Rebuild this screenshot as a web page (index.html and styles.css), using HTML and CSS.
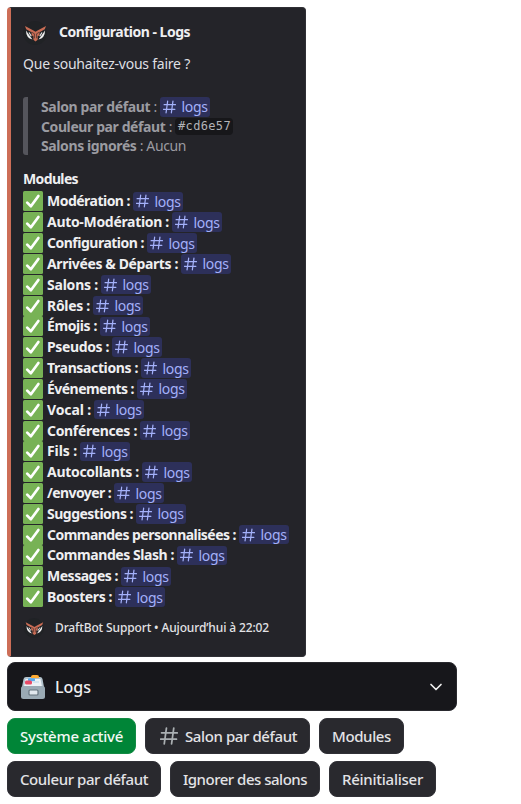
FILE: index.html
```
<!DOCTYPE html>
<html lang="fr">
<head>
<meta charset="utf-8">
<title>Configuration - Logs</title>
<link rel="stylesheet" href="styles.css">
</head>
<body>
<svg class="defs" aria-hidden="true">
  <symbol id="owl" viewBox="0 0 24 24">
    <circle cx="12" cy="12" r="12" fill="#202225"/>
    <path d="M3 9.500Q3 17 9.500 18.500L6.500 14.500ZM22 9.500Q22 17 15.500 18.500L18.500 14.500Z" fill="#f0f0f0"/>
    <path d="M6 11.500 8.300 15.300M19 11.500 16.700 15.300" fill="none" stroke="#e4e4e4" stroke-width="1.200"/>
    <path d="M2 5 10 9.300l2.500 1.500 2.500-1.500L23 5l-1.200 3.300-5.300 3v2.900l-1.800 1v3.600L12.500 20.500l-2.100-1.700v-3.600l-1.800-1v-2.900L3.200 8.300Z" fill="#c96c55"/>
    <path d="M8.700 11.200 11.400 12.800v4.500M16.300 11.200 13.600 12.800v4.500" fill="none" stroke="#3b2c2b" stroke-width=".7"/>
  </symbol>
  <symbol id="hash" viewBox="0 0 14 14">
    <path d="M5 .8 3.300 13.200M10.700 .8 9 13.200M1.200 4.500H13.500M.5 9.500H12.800" fill="none" stroke="currentColor" stroke-width="1.350" stroke-linecap="round"/>
  </symbol>
  <symbol id="check" viewBox="0 0 20 20">
    <rect width="20" height="20" rx="1.500" fill="#77b255"/>
    <path d="M4.200 11.600 7.900 15.200 15.400 5" fill="none" stroke="#fff" stroke-width="2.700" stroke-linecap="round" stroke-linejoin="round"/>
  </symbol>
</svg>
<main class="message">
  <article class="embed">
    <header class="author"><svg class="author-icon"><use href="#owl"/></svg><b data-width="131">Configuration - Logs</b></header>
    <p class="question"><span data-width="167">Que souhaitez-vous faire ?</span></p>
    <blockquote class="quote">
      <div class="quote-line"><span class="key" data-width="116" data-gap="3"><b>Salon par défaut</b> :</span><span class="chip"><svg><use href="#hash"/></svg><span data-width="26">logs</span></span></div>
      <div class="quote-line"><span class="key" data-width="131" data-gap="3"><b>Couleur par défaut</b> :</span><code><span data-width="53">#cd6e57</span></code></div>
      <div class="quote-line"><span data-width="145"><b>Salons ignorés</b> : Aucun</span></div>
    </blockquote>
    <h2 class="heading"><span data-width="55">Modules</span></h2>
    <div class="modules" id="modules"></div>
    <footer class="footer"><svg class="footer-icon"><use href="#owl"/></svg><span data-width="214">DraftBot Support • Aujourd’hui à 22:02</span></footer>
  </article>
  <div class="select">
    <svg class="cabinet" viewBox="0 0 24 24">
      <path d="M1 12 2.500 4Q3 2 5 2H19Q21 2 21.500 4L23 12Z" fill="#b2c2cc"/>
      <path d="M3 12 4.500 4H19.500L21 12Z" fill="#edf2f5"/>
      <path d="M10 2Q10 0 12 0h4q2 0 2 2v1h-8Z" fill="#ffac33"/>
      <rect x="7" y="3.200" width="7" height="3" rx="1" fill="#55acee"/>
      <path d="M12 6h6v2h-6Z" fill="#d3e4ef"/>
      <rect x="4" y="5.500" width="7" height="4" rx="1.500" fill="#e84b67"/>
      <rect y="11" width="24" height="13" rx="2.500" fill="#9aaab4"/>
      <rect x="8" y="15" width="9" height="5" rx="1" fill="#e1e8ed" stroke="#66757f" stroke-width="1.200"/>
    </svg>
    <span data-width="36">Logs</span>
    <svg class="chevron" viewBox="0 0 14 8"><path d="m2 1.500 5 5 5-5" fill="none" stroke="#eee" stroke-width="1.700" stroke-linecap="round" stroke-linejoin="round"/></svg>
  </div>
  <div class="buttons">
    <button class="success"><span data-width="103">Système activé</span></button>
    <button><svg class="button-hash"><use href="#hash"/></svg><span data-width="112">Salon par défaut</span></button>
    <button><span data-width="59">Modules</span></button>
  </div>
  <div class="buttons">
    <button><span data-width="128">Couleur par défaut</span></button>
    <button><span data-width="124">Ignorer des salons</span></button>
    <button><span data-width="81">Réinitialiser</span></button>
  </div>
</main>
<script src="app.js"></script>
</body>
</html>
```
FILE: styles.css
```
* { box-sizing: border-box; }
body { margin: 0; background: #fff; color: #efeff1; font-family: "Noto Sans", "Open Sans", sans-serif; font-size: 14px; white-space: nowrap; }
svg { display: block; flex: none; }
p, h2, blockquote { margin: 0; }
.defs { position: absolute; width: 0; height: 0; }
[data-width] { display: inline-block; flex: none; white-space: pre; }
.message { padding: 7px; }
.embed { width: 299px; height: 650px; padding: 12px 12px 0; border: 1px solid #303035; border-left: 4px solid #cd6e57; border-radius: 4px; background: #242429; }
.author { display: flex; align-items: center; height: 24px; gap: 12px; }
.author b { margin-top: -1px; }
.author-icon { width: 24px; height: 24px; margin-top: 2px; }
.question { height: 20px; margin-top: 10px; line-height: 20px; color: #dfdfe2; }
.quote { margin-top: 23px; height: 58px; padding-left: 13px; border-left: 5px solid #55555c; border-radius: 3px; color: #9b9ba1; }
.quote-line { display: flex; align-items: center; height: 19.500px; }
.chip { display: flex; align-items: center; width: 49.500px; height: 19.500px; padding-left: 3px; border-radius: 3px; background: #2d305a; color: #a4b1fa; line-height: 19px; }
.chip svg { width: 13px; height: 14px; margin-right: 5.500px; }
code { width: 58px; height: 17px; padding-left: 3px; border-radius: 4px; background: #17171a; color: #b3b3b7; font: 12px/17px "DejaVu Sans Mono", monospace; }
.heading { height: 20px; margin-top: 14px; font-size: 14px; line-height: 20px; }
.modules { margin-top: 2px; }
.module { display: flex; align-items: center; height: 20.840px; }
.module > svg { width: 20px; height: 20px; margin-right: 4px; }
.label { flex: none; font-weight: 700; line-height: 20px; }
.footer { display: flex; align-items: center; height: 20px; margin-top: 10px; gap: 11px; font-size: 12px; font-weight: 500; color: #e2e2e5; }
.footer-icon { width: 20px; height: 20px; margin-left: 1px; }
.select { display: flex; align-items: center; width: 450px; height: 49px; margin: 5px 0 7px; padding: 0 13px; border: 1px solid #29292e; border-radius: 8px; background: #17171b; font-size: 16px; font-weight: 500; }
.cabinet { width: 24px; height: 24px; margin-right: 10px; }
.chevron { width: 14px; height: 8px; margin-left: auto; }
.buttons { display: flex; gap: 9px; margin-bottom: 7px; }
button { display: flex; align-items: center; height: 36px; padding: 0 12px 1px; border: 1px solid #303036; border-radius: 8px; background: #29292e; color: #e3e3e6; font: 500 15px/20px "Noto Sans", sans-serif; }
.success { border-color: #138b44; background: #008537; color: #f2f8f4; }
.button-hash { width: 18px; height: 18px; margin: 1px 7px 0 2px; color: #aaafb2; }
```
FILE: app.js
```
const modules = [
  ['Modération', 86], ['Auto-Modération', 125], ['Configuration', 100], ['Arrivées & Départs', 134],
  ['Salons', 54], ['Rôles', 46], ['Émojis', 53], ['Pseudos', 65], ['Transactions', 94],
  ['Événements', 90], ['Vocal', 47], ['Conférences', 93], ['Fils', 33], ['Autocollants', 95],
  ['/envoyer', 67], ['Suggestions', 89], ['Commandes personnalisées', 192],
  ['Commandes Slash', 130], ['Messages', 74], ['Boosters', 68]
];
document.getElementById('modules').innerHTML = modules.map(([name, width]) =>
  `<div class="module"><svg><use href="#check"/></svg><span class="label" data-width="${width - 3}" data-gap="3">${name.replace('&', '&amp;')} :</span><span class="chip"><svg><use href="#hash"/></svg><span data-width="26">logs</span></span></div>`
).join('');

document.querySelectorAll('[data-width]').forEach(el => {
  const target = Number(el.dataset.width);
  const natural = el.getBoundingClientRect().width;
  el.style.letterSpacing = `${(target - natural) / el.textContent.length}px`;
  el.style.width = `${target + Number(el.dataset.gap || 0)}px`;
});
```
